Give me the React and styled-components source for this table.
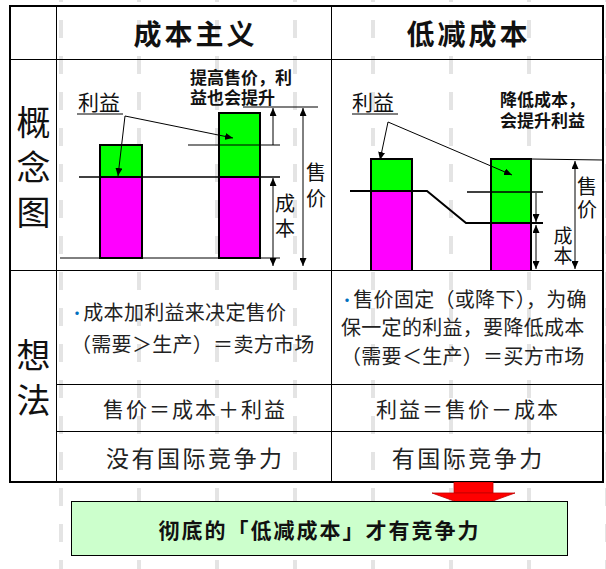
import React from 'react';
import styled, { createGlobalStyle } from 'styled-components';

const GlobalStyle = createGlobalStyle`
  * { box-sizing: border-box; }
  html, body { margin: 0; padding: 0; }
  body {
    width: 606px;
    height: 569px;
    overflow: hidden;
    background-color: #fff;
    background-image:
      linear-gradient(to bottom, transparent 18px, #fff 18px),
      linear-gradient(to right, transparent 59px, #e4e4e4 59px, #e4e4e4 63px, transparent 63px);
    background-size: 78px 36px;
    background-position: 0 20px;
    font-family: "Noto Sans CJK SC", "Liberation Sans", sans-serif;
    color: #1a1a1a;
  }
`;

const Page = styled.div`
  padding: 5px 0 0 9px;
`;

const Table = styled.div`
  display: grid;
  width: 595px;
  border: 2px solid #000;
  grid-template-columns: 46px 275px 270px;
  grid-template-rows: 53px 211px 114px 47px 49px;
`;

const Cell = styled.div`
  grid-column: ${p => p.$col};
  grid-row: ${p => p.$row};
  border-right: ${p => (p.$col < 3 ? '1px solid #000' : 'none')};
  border-bottom: ${p => (p.$last ? 'none' : '1px solid #000')};
  overflow: hidden;
`;

const HeaderCell = styled(Cell)`
  display: flex;
  align-items: center;
  justify-content: center;
  font-size: 28px;
  font-weight: 700;
  letter-spacing: 3px;
  padding-left: 3px;
  color: #111;
`;

const SideCell = styled(Cell)`
  display: flex;
  flex-direction: column;
  align-items: center;
  justify-content: center;
  gap: 10px;
  font-size: 34px;
  line-height: 35px;
  color: #111;
`;

const NoteCell = styled(Cell)`
  display: flex;
  align-items: center;
  padding-left: ${p => p.$pad}px;
  font-size: 20px;
  line-height: ${p => p.$lh}px;
  letter-spacing: 0.3px;
  white-space: nowrap;
  color: #222;
`;

const Bullet = styled.span`
  color: #0070c0;
  font-size: 16px;
  margin-left: -2px;
  margin-right: -2px;
  vertical-align: 1px;
`;

const PlainCell = styled(Cell)`
  display: flex;
  align-items: center;
  justify-content: center;
  font-size: ${p => p.$size}px;
  letter-spacing: ${p => p.$spacing}px;
  padding-left: ${p => p.$spacing}px;
  color: #222;
`;

const Chart = styled.svg`
  display: block;
  font-family: "Noto Sans CJK SC", "Liberation Sans", sans-serif;
`;

const Label = styled.text`
  font-size: ${p => p.$size}px;
  font-weight: ${p => (p.$bold ? 700 : 400)};
  fill: #111;
`;

const Footer = styled.div`
  position: relative;
  margin: 18px 0 0 62px;
  width: 497px;
`;

const DownArrow = styled.svg`
  position: absolute;
  left: 361px;
  top: -19px;
`;

const Banner = styled.div`
  position: relative;
  z-index: 1;
  height: 55px;
  background: #ccffcc;
  border: 1px solid #000;
  display: flex;
  align-items: center;
  justify-content: center;
  font-size: 21px;
  font-weight: 700;
  letter-spacing: 2px;
  color: #111;
`;

const GREEN = '#00ff00';
const MAGENTA = '#ff00ff';

function Marker({ id }) {
  return (
    <defs>
      <marker
        id={id}
        viewBox="0 0 8 7"
        refX="8"
        refY="3.5"
        markerWidth="8"
        markerHeight="7"
        markerUnits="userSpaceOnUse"
        orient="auto-start-reverse"
      >
        <path d="M0,0 L8,3.5 L0,7 z" fill="#000" />
      </marker>
    </defs>
  );
}

function Bar({ x, w, top, mid, bottom }) {
  return (
    <g stroke="#000" strokeWidth="2">
      <rect x={x} y={top} width={w} height={mid - top} fill={GREEN} />
      <rect x={x} y={mid} width={w} height={bottom - mid} fill={MAGENTA} />
    </g>
  );
}

function CostPlusChart() {
  const m = 'url(#ahL)';
  return (
    <Chart width="274" height="210" viewBox="57 60 274 210">
      <Marker id="ahL" />
      <Bar x={100} w={42} top={145} mid={177} bottom={258} />
      <Bar x={219} w={41} top={113} mid={177} bottom={258} />
      <g stroke="#000">
        <line x1="60" y1="258" x2="280" y2="258" strokeWidth="1" />
        <line x1="79" y1="177" x2="280" y2="177" strokeWidth="1.5" />
        <line x1="188" y1="145" x2="280" y2="145" strokeWidth="1.2" />
        <line x1="243" y1="107" x2="318" y2="107" strokeWidth="1.2" />
        <line x1="273" y1="108" x2="273" y2="145" strokeWidth="1" markerStart={m} />
        <line x1="273" y1="178" x2="273" y2="266" strokeWidth="1" markerStart={m} markerEnd={m} />
        <line x1="303" y1="108" x2="303" y2="266" strokeWidth="1" markerStart={m} markerEnd={m} />
        <line x1="77" y1="114" x2="123" y2="114" strokeWidth="1" />
        <line x1="125" y1="116" x2="118" y2="176" strokeWidth="1" markerEnd={m} />
        <line x1="125" y1="116" x2="233" y2="138" strokeWidth="1" markerEnd={m} />
      </g>
      <Label x="78" y="110" $size={21}>利益</Label>
      <Label x="190" y="84" $size={17} $bold>提高售价，利</Label>
      <Label x="190" y="104" $size={17} $bold>益也会提升</Label>
      <Label x="316" y="180" $size={20} textAnchor="middle">售</Label>
      <Label x="316" y="206" $size={20} textAnchor="middle">价</Label>
      <Label x="285" y="211" $size={20} textAnchor="middle">成</Label>
      <Label x="285" y="236" $size={20} textAnchor="middle">本</Label>
    </Chart>
  );
}

function CostDownChart() {
  const m = 'url(#ahR)';
  return (
    <Chart width="270" height="210" viewBox="332 60 270 210">
      <Marker id="ahR" />
      <Bar x={371} w={41} top={159} mid={191} bottom={272} />
      <Bar x={491} w={40} top={159} mid={223} bottom={272} />
      <g stroke="#000" fill="none">
        <polyline points="350,191 427,191 466,223 543,223" strokeWidth="2" />
        <line x1="467" y1="192" x2="543" y2="192" strokeWidth="1.5" />
        <line x1="531" y1="159" x2="603" y2="160" strokeWidth="1" />
        <line x1="536" y1="193" x2="536" y2="222" strokeWidth="1" markerEnd={m} />
        <line x1="536" y1="225" x2="536" y2="269" strokeWidth="1" markerStart={m} markerEnd={m} />
        <line x1="575" y1="161" x2="575" y2="269" strokeWidth="1" markerStart={m} markerEnd={m} />
        <line x1="352" y1="114" x2="398" y2="114" strokeWidth="1" />
        <line x1="388" y1="122" x2="380" y2="160" strokeWidth="1" markerEnd={m} />
        <line x1="388" y1="122" x2="512" y2="175" strokeWidth="1" markerEnd={m} />
      </g>
      <Label x="352" y="110" $size={21}>利益</Label>
      <Label x="500" y="106" $size={17} $bold>降低成本，</Label>
      <Label x="500" y="127" $size={17} $bold>会提升利益</Label>
      <Label x="587" y="194" $size={20} textAnchor="middle">售</Label>
      <Label x="587" y="217" $size={20} textAnchor="middle">价</Label>
      <Label x="563" y="243" $size={19} textAnchor="middle">成</Label>
      <Label x="563" y="263" $size={19} textAnchor="middle">本</Label>
    </Chart>
  );
}

export default function App() {
  return (
    <Page>
      <GlobalStyle />
      <Table>
        <Cell $col={1} $row={1} />
        <HeaderCell $col={2} $row={1}>成本主义</HeaderCell>
        <HeaderCell $col={3} $row={1}>低减成本</HeaderCell>

        <SideCell $col={1} $row={2}>
          <span>概</span>
          <span>念</span>
          <span>图</span>
        </SideCell>
        <Cell $col={2} $row={2}>
          <CostPlusChart />
        </Cell>
        <Cell $col={3} $row={2}>
          <CostDownChart />
        </Cell>

        <SideCell $col={1} $row="3 / span 3" $last>
          <span>想</span>
          <span>法</span>
        </SideCell>
        <NoteCell $col={2} $row={3} $pad={14} $lh={31}>
          <div>
            <Bullet>•</Bullet>成本加利益来决定售价
            <br />
            （需要＞生产）＝卖方市场
          </div>
        </NoteCell>
        <NoteCell $col={3} $row={3} $pad={9} $lh={28.5}>
          <div>
            <Bullet>•</Bullet>售价固定（或降下），为确
            <br />
            保一定的利益，要降低成本
            <br />
            （需要＜生产）＝买方市场
          </div>
        </NoteCell>

        <PlainCell $col={2} $row={4} $size={21} $spacing={2}>售价＝成本＋利益</PlainCell>
        <PlainCell $col={3} $row={4} $size={21} $spacing={2}>利益＝售价－成本</PlainCell>

        <PlainCell $col={2} $row={5} $size={23} $spacing={2.5} $last>没有国际竞争力</PlainCell>
        <PlainCell $col={3} $row={5} $size={23} $spacing={2.5} $last>有国际竞争力</PlainCell>
      </Table>

      <Footer>
        <DownArrow width="84" height="28" viewBox="0 0 84 28">
          <rect x="22" y="0" width="39" height="11" fill="#ff0000" stroke="#c00000" strokeWidth="0.8" />
          <polygon points="0,11 83,11 41.5,26" fill="#ff0000" stroke="#c00000" strokeWidth="0.8" />
        </DownArrow>
        <Banner>彻底的「低减成本」才有竞争力</Banner>
      </Footer>
    </Page>
  );
}
